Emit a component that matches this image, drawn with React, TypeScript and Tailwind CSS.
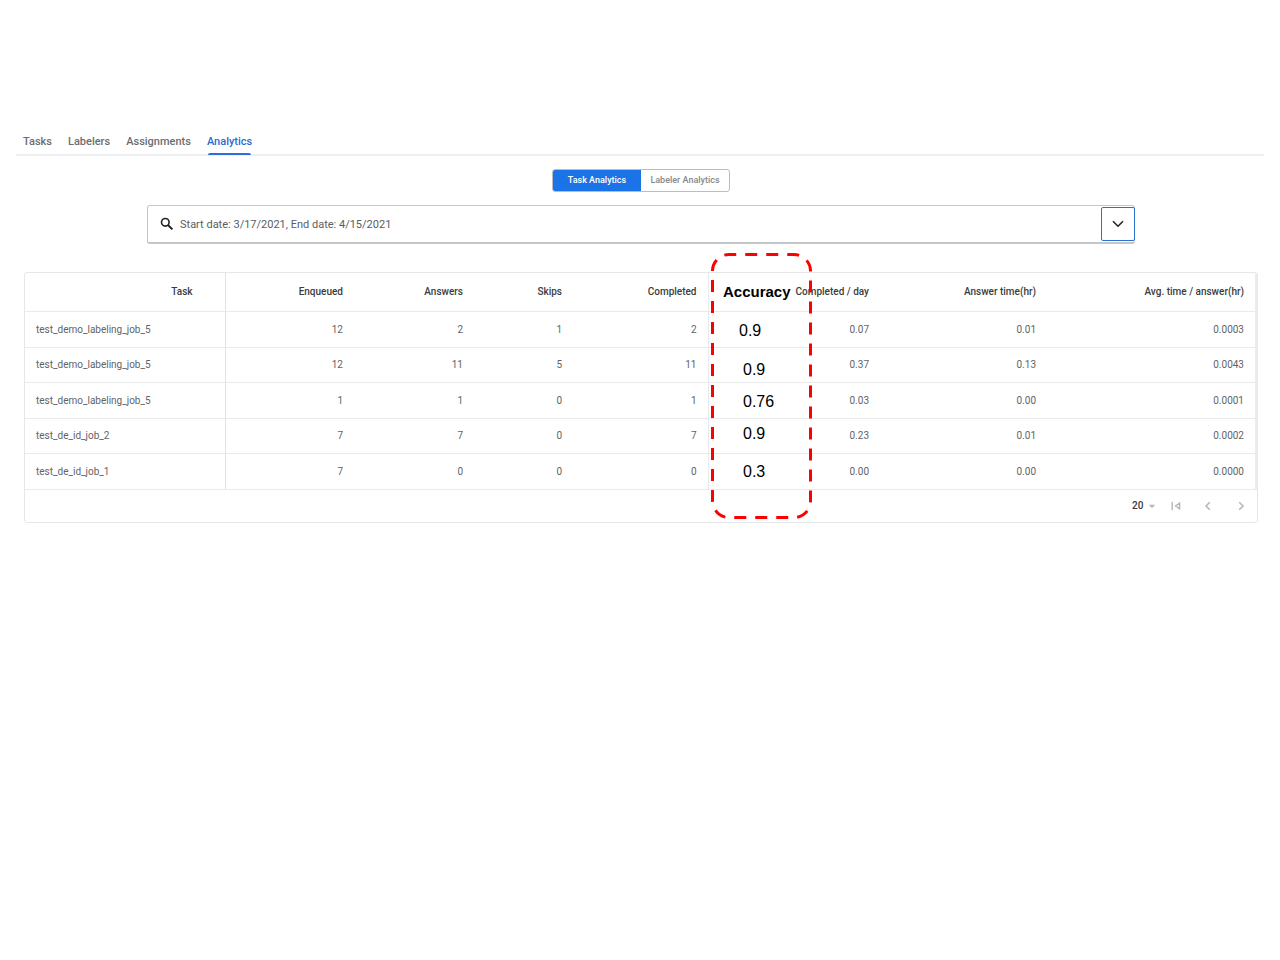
import { MdArrowDropDown } from "react-icons/md";

type Row = {
  task: string;
  enqueued: string;
  answers: string;
  skips: string;
  completed: string;
  perDay: string;
  time: string;
  avg: string;
};

const rows: Row[] = [
  { task: "test_demo_labeling_job_5", enqueued: "12", answers: "2", skips: "1", completed: "2", perDay: "0.07", time: "0.01", avg: "0.0003" },
  { task: "test_demo_labeling_job_5", enqueued: "12", answers: "11", skips: "5", completed: "11", perDay: "0.37", time: "0.13", avg: "0.0043" },
  { task: "test_demo_labeling_job_5", enqueued: "1", answers: "1", skips: "0", completed: "1", perDay: "0.03", time: "0.00", avg: "0.0001" },
  { task: "test_de_id_job_2", enqueued: "7", answers: "7", skips: "0", completed: "7", perDay: "0.23", time: "0.01", avg: "0.0002" },
  { task: "test_de_id_job_1", enqueued: "7", answers: "0", skips: "0", completed: "0", perDay: "0.00", time: "0.00", avg: "0.0000" },
];

const accuracy = [
  { value: "0.9", place: "mt-[7px] pl-7" },
  { value: "0.9", place: "mt-[7px] pl-8" },
  { value: "0.76", place: "pl-8" },
  { value: "0.9", place: "pl-8" },
  { value: "0.3", place: "mt-1.5 pl-8" },
];

const tabs = ["Tasks", "Labelers", "Assignments", "Analytics"];

function Tabs() {
  return (
    <nav aria-label="Sections" className="flex gap-4 border-b-2 border-[#eff0f1] pl-[7px] text-[11px] leading-4 font-medium">
      {tabs.map((tab) =>
        tab === "Analytics" ? (
          <a key={tab} href="#analytics" aria-current="page" className="relative pb-1 text-[#2a6bd0]">
            {tab}
            <span className="absolute inset-x-px -bottom-px h-0.5 rounded-t-sm bg-[#2a6fdb]" />
          </a>
        ) : (
          <a key={tab} href={"#" + tab.toLowerCase()} className="pb-1 text-[#6a6e72]">
            {tab}
          </a>
        )
      )}
    </nav>
  );
}

function ModeSwitch() {
  return (
    <div className="flex justify-center pt-[13px] pl-0.5">
      <div className="flex h-[23px] w-[178px] overflow-hidden rounded-[3px] border border-[#b9bdc1] text-[9px] font-medium">
        <button type="button" aria-pressed="true" className="flex-1 bg-[#1b73e8] pt-px text-white">
          Task Analytics
        </button>
        <button type="button" aria-pressed="false" className="flex-1 pt-px text-[#85898e]">
          Labeler Analytics
        </button>
      </div>
    </div>
  );
}

function SearchBar() {
  return (
    <div className="mt-[13px] mr-[129px] ml-[131px] flex h-[39px] items-center rounded-[3px] border border-b-2 border-[#c4c7c9] pl-[11px]">
      <label htmlFor="filter" className="shrink-0">
        <svg viewBox="0 0 16 16" className="h-4 w-4" fill="none" stroke="#222" role="img" aria-label="Filter">
          <circle cx="6.3" cy="6.3" r="3.8" strokeWidth="1.6" />
          <path d="M9.2 9.2 13.4 13.4" strokeWidth="2" />
        </svg>
      </label>
      <input
        id="filter"
        defaultValue="Start date: 3/17/2021, End date: 4/15/2021"
        className="min-w-0 flex-1 pt-0.5 pl-[5px] text-[11px] text-[#5a5d61] outline-none"
      />
      <button
        type="button"
        aria-label="Show filters"
        className="-mr-px flex h-[34px] w-[34px] items-center justify-center rounded-[2px] border border-[#2b72d0]"
      >
        <svg viewBox="0 0 12 8" className="h-2 w-3" fill="none" stroke="#222" strokeWidth="1.6">
          <path d="M1 1.2 6 6.2 11 1.2" />
        </svg>
      </button>
    </div>
  );
}

function AccuracyCallout() {
  return (
    <section aria-label="Accuracy" className="pointer-events-none absolute -top-5 left-[686px] h-[266px] w-[101px] font-['Liberation_Sans',sans-serif] text-base text-black">
      <svg viewBox="0 0 101 266" className="absolute inset-0 h-full w-full" fill="none" stroke="#f00" strokeWidth="3" strokeDasharray="12 9">
        <path d="M1.5 18A16.5 16.5 0 0 1 18 1.5H83A16.5 16.5 0 0 1 99.5 18V248A16.5 16.5 0 0 1 83 264.5H18A16.5 16.5 0 0 1 1.5 248Z" />
      </svg>
      <h2 className="mt-[23px] pl-3 text-[15px] leading-8 font-bold">Accuracy</h2>
      <ul className="leading-8">
        {accuracy.map((item, i) => (
          <li key={i} className={item.place}>
            {item.value}
          </li>
        ))}
      </ul>
    </section>
  );
}

function AnalyticsTable() {
  return (
    <div className="relative mx-2 mt-7 mr-1.5 rounded-[3px] border border-[#e6e7e9]">
      <table className="w-full table-fixed border-collapse text-right text-[10px] text-[#5f6367]">
        <colgroup>
          <col className="w-[200px]" />
          <col className="w-[129px]" />
          <col className="w-[120px]" />
          <col className="w-[99px]" />
          <col className="w-[135px]" />
          <col className="w-[172px]" />
          <col className="w-[167px]" />
          <col />
        </colgroup>
        <thead>
          <tr className="h-[38px] border-b border-[#e9eaec] text-[#3a3d40] [&>th]:font-medium">
            <th scope="col" className="border-r border-[#e0e2e5] pr-8">Task</th>
            <th scope="col" className="pr-[11px]">Enqueued</th>
            <th scope="col" className="pr-[11px]">Answers</th>
            <th scope="col" className="pr-[11px]">Skips</th>
            <th scope="col" className="border-r border-[#e8e9f0] pr-[11px]">Completed</th>
            <th scope="col" className="pr-[11px]">Completed / day</th>
            <th scope="col" className="pr-[11px]">Answer time(hr)</th>
            <th scope="col" className="border-r-2 border-[#ebecee] pr-[11px]">Avg. time / answer(hr)</th>
          </tr>
        </thead>
        <tbody>
          {rows.map((row, i) => (
            <tr key={i} className="h-9 border-b border-[#e9eaec] even:h-[35px]">
              <td className="border-r border-[#e0e2e5] pl-[11px] text-left">{row.task}</td>
              <td className="pr-[11px]">{row.enqueued}</td>
              <td className="pr-[11px]">{row.answers}</td>
              <td className="pr-[11px]">{row.skips}</td>
              <td className="border-r border-[#e8e9f0] pr-[11px]">{row.completed}</td>
              <td className="pr-[11px]">{row.perDay}</td>
              <td className="pr-[11px]">{row.time}</td>
              <td className="border-r-2 border-[#ebecee] pr-[11px]">{row.avg}</td>
            </tr>
          ))}
        </tbody>
      </table>
      <Pager />
      <AccuracyCallout />
    </div>
  );
}

function Pager() {
  return (
    <div className="flex h-8 items-center justify-end pr-2 text-[#b3b5b8]">
      <div className="relative mr-3 flex items-center">
        <select aria-label="Rows per page" defaultValue="20" className="w-6 appearance-none text-[10px] font-medium text-[#37393c] outline-none">
          <option>20</option>
        </select>
        <MdArrowDropDown className="pointer-events-none absolute right-0 h-4 w-4 translate-x-1" />
      </div>
      <button type="button" aria-label="First page" className="mr-4 flex h-4 w-4 items-center justify-center">
        <svg viewBox="0 0 10 10" className="h-2.5 w-2.5" fill="none" stroke="currentColor" strokeWidth="1.4">
          <path d="M1.2 1V9M8.6 2.2V7.8L4.6 5Z" />
        </svg>
      </button>
      <button type="button" aria-label="Previous page" className="mr-[17px] flex h-4 w-4 items-center justify-center">
        <svg viewBox="0 0 10 10" className="h-2.5 w-2.5" fill="none" stroke="currentColor" strokeWidth="1.5">
          <path d="M6.8 1.2 3 5 6.8 8.8" />
        </svg>
      </button>
      <button type="button" aria-label="Next page" className="flex h-4 w-4 items-center justify-center">
        <svg viewBox="0 0 10 10" className="h-2.5 w-2.5" fill="none" stroke="currentColor" strokeWidth="1.5">
          <path d="M3.2 1.2 7 5 3.2 8.8" />
        </svg>
      </button>
    </div>
  );
}

export default function App() {
  return (
    <main className="min-h-screen bg-white px-4 pt-[134px] font-[Roboto,sans-serif]">
      <Tabs />
      <ModeSwitch />
      <SearchBar />
      <AnalyticsTable />
    </main>
  );
}
